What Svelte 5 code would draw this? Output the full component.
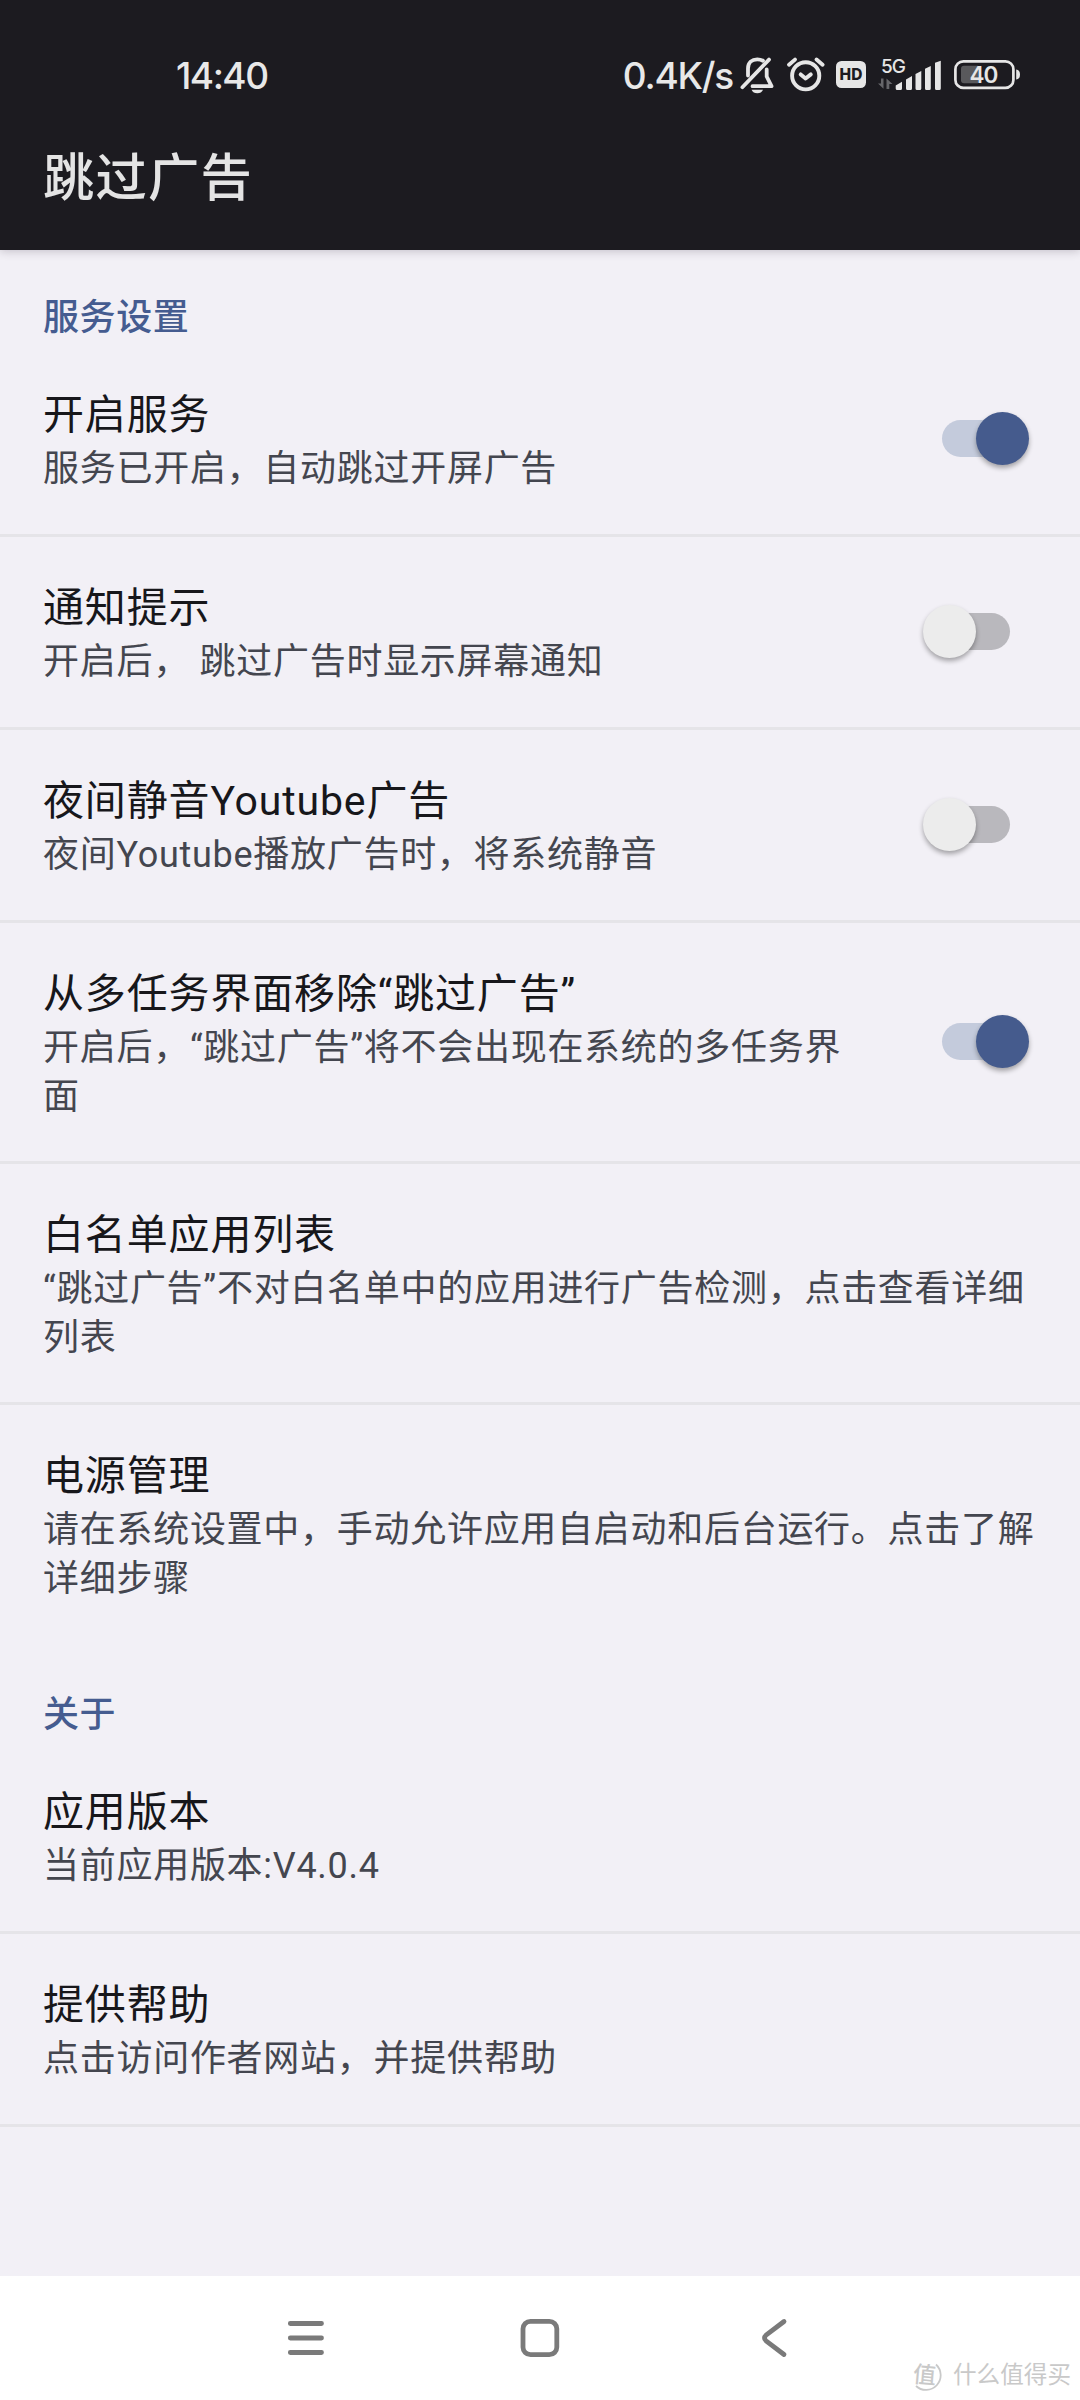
<script>
  const sections = [
    {
      name: '服务设置',
      items: [
        { title: '开启服务', summary: '服务已开启，自动跳过开屏广告', on: true },
        { title: '通知提示', summary: '开启后， 跳过广告时显示屏幕通知', on: false },
        { title: '夜间静音Youtube广告', summary: '夜间Youtube播放广告时，将系统静音', on: false },
        {
          title: '从多任务界面移除“跳过广告”',
          summary: '开启后，“跳过广告”将不会出现在系统的多任务界面',
          on: true
        },
        {
          title: '白名单应用列表',
          summary: '“跳过广告”不对白名单中的应用进行广告检测，点击查看详细列表'
        },
        {
          title: '电源管理',
          summary: '请在系统设置中，手动允许应用自启动和后台运行。点击了解详细步骤',
          last: true
        }
      ]
    },
    {
      name: '关于',
      items: [
        { title: '应用版本', summary: '当前应用版本:V4.0.4' },
        { title: '提供帮助', summary: '点击访问作者网站，并提供帮助' }
      ]
    }
  ];
</script>

<div class="screen">
  <header>
    <div class="status">
      <span class="clock">14:40</span>
      <span class="speed">0.4K/s</span>
      <svg class="indicators" width="290" height="50" viewBox="0 0 290 50" fill="none">
        <!-- muted bell -->
        <g stroke="#e6e6e6" stroke-width="3.8" stroke-linecap="round" stroke-linejoin="round">
          <path d="M7.4 37.2 34 9.6" />
          <path d="M13 25.5V18.5C13 12.5 17 9.4 22.3 9.4Q25.5 9.4 28 10.7" />
          <path d="M31.7 19.5V26.5L36.5 36.2H17.5" />
        </g>
        <path d="M16.5 39.8H28Q26.5 43.3 22.3 43.3T16.5 39.8Z" fill="#e6e6e6" />
        <!-- alarm -->
        <g stroke="#e6e6e6" stroke-width="3.9" stroke-linecap="round" stroke-linejoin="round">
          <circle cx="70.7" cy="25.8" r="13.6" />
          <path d="M65.7 24.4 70.6 28.5 75.8 24.4" />
          <path d="M54 14.8 60 9.6M81.5 9.6 87.6 14.8" />
        </g>
        <!-- HD -->
        <rect x="101" y="11" width="30" height="27" rx="5.5" fill="#e6e6e6" />
        <text class="hd" x="116" y="30" text-anchor="middle">HD</text>
        <!-- mobile signal -->
        <text class="net" x="146" y="22.5">5G</text>
        <path d="M148.5 28.5V38.8L143 33.6H146V28.5ZM151.5 39V28.5L157.5 34H154.3V39Z" fill="#66666a" />
        <path
          d="M160.7 35.5 167 31.7V38.5Q167 40 165.5 40H162.2Q160.7 40 160.7 38.5ZM171 29.5 177 26V38.5Q177 40 175.5 40H172.5Q171 40 171 38.5ZM180.5 24 186.3 21V38.5Q186.3 40 184.8 40H182Q180.5 40 180.5 38.5ZM190 18.8 195.8 16V38.5Q195.8 40 194.3 40H191.5Q190 40 190 38.5ZM200 12.8 205.8 10.7V38.5Q205.8 40 204.3 40H201.5Q200 40 200 38.5Z"
          fill="#e6e6e6"
        />
        <!-- battery -->
        <rect x="220.4" y="11.3" width="58" height="26.6" rx="8" stroke="#e6e6e6" stroke-width="2.7" />
        <path d="M229 15.7H243V33.3H229Q226 33.3 226 30.3V18.7Q226 15.7 229 15.7Z" fill="#59595c" />
        <path d="M281.2 19.5Q285 20 285 24.5T281.2 29.5Z" fill="#e6e6e6" />
        <text class="level" x="248.4" y="33" text-anchor="middle">40</text>
      </svg>
    </div>
    <h1>跳过广告</h1>
  </header>

  <main>
    {#each sections as section}
      <section>
        <h2>{section.name}</h2>
        {#each section.items as item}
          <div class="item" class:last={item.last}>
            <div class="text">
              <div class="title">{item.title}</div>
              <div class="summary">{item.summary}</div>
            </div>
            {#if item.on !== undefined}
              <div class="switch" class:on={item.on}>
                <div class="thumb"></div>
              </div>
            {/if}
          </div>
        {/each}
      </section>
    {/each}
  </main>

  <nav>
    <svg width="48" height="48" viewBox="0 0 48 48">
      <path d="M8.3 9.5H39.5M8.3 24H39.5M8.3 38.5H39.5" />
    </svg>
    <svg width="48" height="48" viewBox="0 0 48 48">
      <rect x="7" y="7.3" width="33.8" height="33.4" rx="7.5" />
    </svg>
    <svg width="48" height="48" viewBox="0 0 48 48">
      <path d="M34 7.5 16 21.2Q13 24 16 26.8L34 40.5" />
    </svg>
  </nav>

  <div class="watermark">
    <span class="mark">
      <svg width="30" height="30" viewBox="0 0 30 30">
        <path d="M24 3.500A13.500 13.500 0 0 1 4 25" />
      </svg>
      <b>值</b>
    </span>
    <span>什么值得买</span>
  </div>
</div>

<style>
  :global(body) {
    margin: 0;
  }
  .screen {
    position: relative;
    display: flex;
    flex-direction: column;
    width: 1080px;
    height: 2400px;
    overflow: hidden;
    background: #f2f0f6;
    font-family: Roboto, 'Noto Sans CJK SC', sans-serif;
  }
  header {
    height: 250px;
    box-sizing: border-box;
    padding-top: 50px;
    background: #1c1b20;
    box-shadow: 0 1px 9px rgba(40, 30, 50, 0.24);
    color: #e4e4e4;
  }
  .status {
    display: flex;
    height: 50px;
    padding: 0 55px 0 176px;
    font: 500 37px/51px Inter, Roboto, sans-serif;
    color: #e8e8e8;
  }
  .clock {
    letter-spacing: -1.5px;
  }
  .speed {
    margin-left: auto;
    margin-right: 2px;
    letter-spacing: -1.2px;
  }
  .indicators {
    flex: none;
  }
  .indicators text {
    font-family: Inter, Roboto, sans-serif;
    fill: #e6e6e6;
  }
  .indicators .hd {
    font-size: 15.5px;
    font-weight: 800;
    fill: #1c1b20;
  }
  .indicators .net {
    font-size: 19px;
    font-weight: 500;
    letter-spacing: -1px;
  }
  .indicators .level {
    font-size: 22.5px;
    font-weight: 600;
    letter-spacing: -1px;
  }
  h1 {
    margin: 42px 0 0 43px;
    font-size: 51.3px;
    line-height: 73px;
    font-weight: 500;
    letter-spacing: 1.2px;
  }
  main {
    flex: 1;
  }
  h2 {
    height: 94px;
    box-sizing: border-box;
    margin: 0;
    padding: 44px 43px 0;
    font-size: 36px;
    line-height: 49px;
    font-weight: 500;
    letter-spacing: 0.6px;
    color: #455c90;
  }
  .item {
    display: flex;
    align-items: center;
    justify-content: space-between;
    gap: 60px;
    min-height: 190px;
    padding: 0 40px 0 43px;
    border-bottom: 3px solid #e5e4e8;
  }
  .item:has(.switch) {
    padding-right: 51px;
  }
  .item.last {
    border-bottom-color: transparent;
    margin-bottom: 1px;
  }
  .text {
    flex: 1;
    padding: 43px 0 40px;
  }
  .title {
    padding-bottom: 2px;
    font-size: 41px;
    line-height: 56px;
    letter-spacing: 0.85px;
    color: #17171b;
  }
  .summary {
    font-size: 36px;
    line-height: 48.5px;
    letter-spacing: 0.72px;
    color: #44464f;
  }
  .switch {
    flex: none;
    display: flex;
    align-items: center;
    width: 68px;
    height: 37px;
    margin: 0 19px 1px;
    border-radius: 19px;
    background: #b9b8bd;
  }
  .thumb {
    flex: none;
    width: 53px;
    height: 53px;
    margin-left: -19.5px;
    border-radius: 50%;
    background: #ececec;
    box-shadow: 0 3px 5px rgba(0, 0, 0, 0.33);
  }
  .switch.on {
    background: #c4cbdc;
  }
  .switch.on .thumb {
    margin-left: 34.2px;
    background: #455b8d;
  }
  nav {
    display: flex;
    align-items: center;
    justify-content: center;
    gap: 186px;
    height: 124px;
    background: #fff;
  }
  nav svg {
    fill: none;
    stroke: #7a7a7a;
    stroke-width: 4.8;
    stroke-linecap: round;
    stroke-linejoin: round;
  }
  .watermark {
    position: absolute;
    right: 9px;
    bottom: 9px;
    display: flex;
    align-items: center;
    gap: 8px;
    font-size: 23.6px;
    line-height: 32px;
    color: #c9c9c9;
  }
  .mark {
    position: relative;
    display: grid;
    place-items: center;
    width: 30px;
    height: 30px;
    margin-right: 3px;
  }
  .mark svg,
  .mark b {
    grid-area: 1 / 1;
  }
  .mark svg {
    fill: none;
    stroke: #c9c9c9;
    stroke-width: 1.8;
  }
  .mark b {
    margin-right: 5px;
    font-size: 23px;
    font-weight: 500;
    transform: rotate(5deg);
  }
</style>
